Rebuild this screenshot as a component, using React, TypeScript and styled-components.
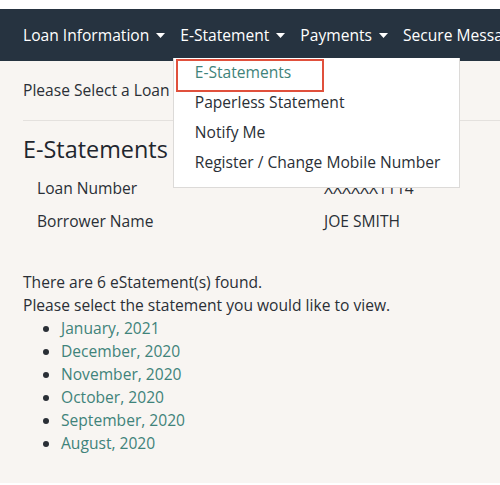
import { FC } from "react";
import styled, { createGlobalStyle } from "styled-components";

const GlobalStyle = createGlobalStyle`
  html, body {
    margin: 0;
    padding: 0;
    background: #fff;
  }
  body {
    font-family: "Open Sans", "Liberation Sans", sans-serif;
    font-size: 15.6px;
    line-height: 23px;
    color: #2a2f36;
  }
`;

const navItems = ["Loan Information", "E-Statement", "Payments", "Secure Messages"];
const menuItems = ["E-Statements", "Paperless Statement", "Notify Me", "Register / Change Mobile Number"];
const statements = [
  "January, 2021",
  "December, 2020",
  "November, 2020",
  "October, 2020",
  "September, 2020",
  "August, 2020",
];

const Caret: FC = () => (
  <CaretIcon width="9" height="5" viewBox="0 0 9 5">
    <path d="M0 0 L9 0 L4.5 5 Z" fill="currentColor" />
  </CaretIcon>
);

const App: FC = () => {
  return (
    <Page>
      <GlobalStyle />
      <NavBar>
        {navItems.map((label, i) => (
          <NavItem key={label}>
            {label}
            {i < 3 && <Caret />}
            {i === 1 && (
              <Dropdown>
                {menuItems.map((item, j) => (
                  <MenuItem key={item} $active={j === 0}>
                    {item}
                    {j === 0 && <Highlight />}
                  </MenuItem>
                ))}
              </Dropdown>
            )}
          </NavItem>
        ))}
      </NavBar>
      <Content>
        <Intro>Please Select a Loan to view</Intro>
        <Rule />
        <Heading>E-Statements</Heading>
        <LoanTable>
          <Cell>Loan Number</Cell>
          <Cell>XXXXXX1114</Cell>
          <Cell>Borrower Name</Cell>
          <Cell>JOE SMITH</Cell>
        </LoanTable>
        <Summary>
          There are 6 eStatement(s) found.
          <br />
          Please select the statement you would like to view.
        </Summary>
        <StatementList>
          {statements.map((s) => (
            <li key={s}>
              <StatementLink href="#">{s}</StatementLink>
            </li>
          ))}
        </StatementList>
      </Content>
    </Page>
  );
};

export default App;

// styled-components
const Page = styled.div`
  width: 500px;
  height: 485px;
  padding-top: 9px;
  box-sizing: border-box;
  overflow: hidden;
  display: flex;
  flex-direction: column;
`;

const NavBar = styled.nav`
  height: 52px;
  flex-shrink: 0;
  background: #263340;
  display: flex;
  align-items: center;
  padding-left: 15.5px;
  white-space: nowrap;
  position: relative;
  z-index: 2;
`;

const NavItem = styled.div`
  position: relative;
  display: flex;
  align-items: center;
  padding: 0 7.5px;
  color: #fff;
`;

const CaretIcon = styled.svg`
  margin-left: 7px;
  margin-top: 1px;
`;

const Dropdown = styled.ul`
  position: absolute;
  top: 34px;
  left: 0;
  margin: 0;
  padding: 0 0 9px;
  list-style: none;
  background: #fff;
  border: 1px solid #dcdad8;
  border-top: none;
  width: 287px;
  box-sizing: border-box;
`;

const MenuItem = styled.li<{ $active: boolean }>`
  position: relative;
  height: 30px;
  display: flex;
  align-items: center;
  padding-left: 21px;
  color: ${(p) => (p.$active ? "#3f837a" : "#2a2f36")};
`;

const Highlight = styled.span`
  position: absolute;
  top: 1px;
  left: 2px;
  width: 148px;
  height: 33px;
  border: 2px solid #e0503c;
  box-sizing: border-box;
`;

const Content = styled.main`
  flex: 1;
  background: #f8f5f2;
  padding: 18px 0 0 23px;
  margin-bottom: 2px;
`;

const Intro = styled.p`
  margin: 0;
`;

const Rule = styled.hr`
  border: none;
  border-top: 1px solid #e4e1de;
  margin: 18px 0 0;
`;

const Heading = styled.h2`
  margin: 12px 0 0;
  font-size: 23.4px;
  font-weight: 400;
  line-height: 32px;
  color: #1f262e;
`;

const LoanTable = styled.div`
  display: grid;
  grid-template-columns: 287px auto;
  padding-left: 14px;
  margin-top: 7px;
`;

const Cell = styled.div`
  padding: 5px 0;
`;

const Summary = styled.p`
  margin: 33px 0 0;
`;

const StatementList = styled.ul`
  margin: 0;
  padding-left: 38px;
`;

const StatementLink = styled.a`
  color: #3f837a;
  text-decoration: none;
`;
